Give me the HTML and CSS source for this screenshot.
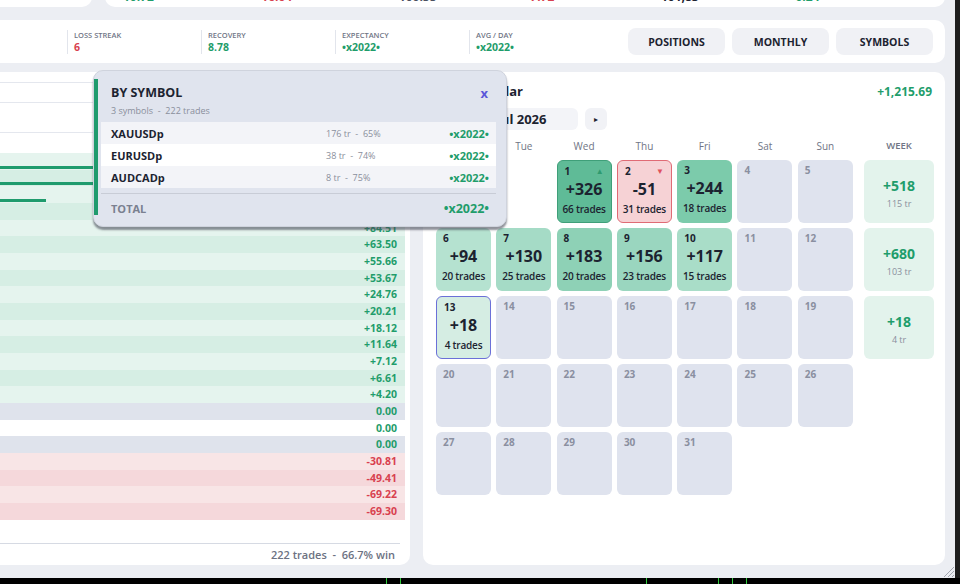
FILE: index.html
```html
<!DOCTYPE html>
<html lang="en">
<head>
  <meta charset="UTF-8" />
  <meta name="viewport" content="width=device-width, initial-scale=1" />
  <title>Trading Journal</title>
  <link rel="stylesheet" href="styles.css">
</head>
<body>

  <div class="frame">
    <div class="app">

      <!-- cartões de resumo (cortados no topo) -->
      <div class="kpis">
        <div class="kpi-card kpi-left"></div>
        <div class="kpi-card kpi-main">
          <span class="kv green">10.72</span>
          <span class="kv red">-16.04</span>
          <span class="kv grey">+100.55</span>
          <span class="kv red">-7.72</span>
          <span class="kv">101,83</span>
          <span class="kv green">0.24</span>
        </div>
      </div>

      <div class="toolbar">
        <div class="stat stat-empty"></div>
        <div class="stat">
          <span class="stat-label">LOSS STREAK</span>
          <span class="stat-value red">6</span>
        </div>
        <div class="stat">
          <span class="stat-label">RECOVERY</span>
          <span class="stat-value green">8.78</span>
        </div>
        <div class="stat">
          <span class="stat-label">EXPECTANCY</span>
          <span class="stat-value green">•x2022•</span>
        </div>
        <div class="stat">
          <span class="stat-label">AVG / DAY</span>
          <span class="stat-value green">•x2022•</span>
        </div>
        <div class="tabs">
          <button>POSITIONS</button>
          <button>MONTHLY</button>
          <button>SYMBOLS</button>
        </div>
      </div>

      <div class="main">

        <section class="list">
          <div class="list-head"></div>
          <div class="list-filter"></div>
          <div class="list-cols"></div>
          <div class="list-sub"></div>

          <div class="row win-a"><span class="bar" style="width:160px"></span><span class="val green">+212.40</span></div>
          <div class="row win-b"><span class="bar" style="width:150px"></span><span class="val green">+180.55</span></div>
          <div class="row win-a"><span class="bar" style="width:46px"></span><span class="val green">+131.20</span></div>
          <div class="row win-b"><span class="bar"></span><span class="val green">+98.73</span></div>
          <div class="row win-a"><span class="bar"></span><span class="val green">+84.51</span></div>
          <div class="row win-b"><span class="bar"></span><span class="val green">+63.50</span></div>
          <div class="row win-a"><span class="bar"></span><span class="val green">+55.66</span></div>
          <div class="row win-b"><span class="bar"></span><span class="val green">+53.67</span></div>
          <div class="row win-a"><span class="bar"></span><span class="val green">+24.76</span></div>
          <div class="row win-b"><span class="bar"></span><span class="val green">+20.21</span></div>
          <div class="row win-a"><span class="bar"></span><span class="val green">+18.12</span></div>
          <div class="row win-b"><span class="bar"></span><span class="val green">+11.64</span></div>
          <div class="row win-a"><span class="bar"></span><span class="val green">+7.12</span></div>
          <div class="row win-b"><span class="bar"></span><span class="val green">+6.61</span></div>
          <div class="row win-a"><span class="bar"></span><span class="val green">+4.20</span></div>
          <div class="row flat"><span class="bar"></span><span class="val green">0.00</span></div>
          <div class="row flat-w"><span class="bar"></span><span class="val green">0.00</span></div>
          <div class="row flat"><span class="bar"></span><span class="val green">0.00</span></div>
          <div class="row loss-a"><span class="bar"></span><span class="val red">-30.81</span></div>
          <div class="row loss-b"><span class="bar"></span><span class="val red">-49.41</span></div>
          <div class="row loss-a"><span class="bar"></span><span class="val red">-69.22</span></div>
          <div class="row loss-b"><span class="bar"></span><span class="val red">-69.30</span></div>

          <div class="list-space"></div>
          <div class="list-foot">222 trades &nbsp;-&nbsp; 66.7% win</div>
        </section>

        <section class="calendar">
          <div class="cal-head">
            <span class="cal-title">P&amp;L Calendar</span>
            <span class="cal-total">+1,215.69</span>
          </div>
          <div class="cal-nav">
            <button class="nav-btn">◂</button>
            <div class="month">Jul 2026</div>
            <button class="nav-btn">▸</button>
          </div>

          <div class="weekdays">
            <span>Mon</span><span>Tue</span><span>Wed</span><span>Thu</span>
            <span>Fri</span><span>Sat</span><span>Sun</span><span class="wk-label">WEEK</span>
          </div>

          <div class="grid">
            <div class="cell blank"></div>
            <div class="cell blank"></div>
            <div class="cell day d1 sel"><span class="num">1</span><span class="pnl">+326</span><span class="trades">66 trades</span><span class="arrow up">▲</span></div>
            <div class="cell day loss"><span class="num">2</span><span class="pnl">-51</span><span class="trades">31 trades</span><span class="arrow down">▼</span></div>
            <div class="cell day d3"><span class="num">3</span><span class="pnl">+244</span><span class="trades">18 trades</span></div>
            <div class="cell"><span class="num">4</span></div>
            <div class="cell"><span class="num">5</span></div>
            <div class="week"><span class="wk-pnl">+518</span><span class="wk-tr">115 tr</span></div>

            <div class="cell day d6"><span class="num">6</span><span class="pnl">+94</span><span class="trades">20 trades</span></div>
            <div class="cell day d7"><span class="num">7</span><span class="pnl">+130</span><span class="trades">25 trades</span></div>
            <div class="cell day d8"><span class="num">8</span><span class="pnl">+183</span><span class="trades">20 trades</span></div>
            <div class="cell day d9"><span class="num">9</span><span class="pnl">+156</span><span class="trades">23 trades</span></div>
            <div class="cell day d10"><span class="num">10</span><span class="pnl">+117</span><span class="trades">15 trades</span></div>
            <div class="cell"><span class="num">11</span></div>
            <div class="cell"><span class="num">12</span></div>
            <div class="week"><span class="wk-pnl">+680</span><span class="wk-tr">103 tr</span></div>

            <div class="cell day today"><span class="num">13</span><span class="pnl">+18</span><span class="trades">4 trades</span></div>
            <div class="cell"><span class="num">14</span></div>
            <div class="cell"><span class="num">15</span></div>
            <div class="cell"><span class="num">16</span></div>
            <div class="cell"><span class="num">17</span></div>
            <div class="cell"><span class="num">18</span></div>
            <div class="cell"><span class="num">19</span></div>
            <div class="week"><span class="wk-pnl">+18</span><span class="wk-tr">4 tr</span></div>

            <div class="cell"><span class="num">20</span></div>
            <div class="cell"><span class="num">21</span></div>
            <div class="cell"><span class="num">22</span></div>
            <div class="cell"><span class="num">23</span></div>
            <div class="cell"><span class="num">24</span></div>
            <div class="cell"><span class="num">25</span></div>
            <div class="cell"><span class="num">26</span></div>
            <div class="week blank"></div>

            <div class="cell"><span class="num">27</span></div>
            <div class="cell"><span class="num">28</span></div>
            <div class="cell"><span class="num">29</span></div>
            <div class="cell"><span class="num">30</span></div>
            <div class="cell"><span class="num">31</span></div>
          </div>
        </section>

        <!-- popup por símbolo -->
        <div class="popup">
          <span class="popup-accent"></span>
          <div class="popup-body">
            <div class="pop-head">
              <div>
                <div class="pop-title">BY SYMBOL</div>
                <div class="pop-sub">3 symbols &nbsp;-&nbsp; 222 trades</div>
              </div>
              <span class="pop-close">x</span>
            </div>
            <div class="pop-row alt"><span class="sym">XAUUSDp</span><span class="sym-stat">176 tr &nbsp;-&nbsp; 65%</span><span class="sym-val">•x2022•</span></div>
            <div class="pop-row"><span class="sym">EURUSDp</span><span class="sym-stat">38 tr &nbsp;-&nbsp; 74%</span><span class="sym-val">•x2022•</span></div>
            <div class="pop-row alt"><span class="sym">AUDCADp</span><span class="sym-stat">8 tr &nbsp;-&nbsp; 75%</span><span class="sym-val">•x2022•</span></div>
            <div class="pop-total"><span>TOTAL</span><span class="total-val">•x2022•</span></div>
          </div>
        </div>

      </div>

      <svg class="grip" width="14" height="14" viewBox="0 0 14 14">
        <path d="M13 3 L3 13 M13 7 L7 13 M13 11 L11 13" stroke="#a3a7b1" stroke-width="1" fill="none"/>
      </svg>
    </div>
    <div class="edge"></div>
  </div>

  <div class="taskbar">
    <span class="tick"></span><span class="tick"></span><span class="tick"></span>
    <span class="tick"></span><span class="tick"></span><span class="tick"></span>
  </div>

</body>
</html>
```

FILE: styles.css
```css
/* Reset básico */
* {
  margin: 0;
  padding: 0;
  box-sizing: border-box;
}
html, body {
  height: 100%;
}
body {
  background: #000;
  font-family: 'Open Sans', 'Liberation Sans', sans-serif;
  color: #1c2330;
  overflow: hidden;
}
.green { color: #1f9d6b; }
.red { color: #d8414f; }
.grey { color: #4a5060; }

.frame {
  display: flex;
  height: 578px;
}
.app {
  width: 955px;
  background: #eceef3;
  position: relative;
  overflow: hidden;
}
.edge {
  flex: 1;
  background: #1e1e1e;
}

/* topo cortado */
.kpis {
  display: flex;
  gap: 13px;
  margin-top: -20px;
  height: 27px;
}
.kpi-card {
  background: #fff;
  border-radius: 0 0 10px 10px;
}
.kpi-left {
  width: 92px;
  border-radius: 0 0 10px 0;
}
.kpi-main {
  width: 840px;
  display: grid;
  grid-template-columns: repeat(6, 134.5px);
  padding: 10px 0 0 18px;
}
.kv {
  font-size: 12px;
  font-weight: 700;
  line-height: 14px;
}

/* barra de estatísticas */
.toolbar {
  margin-top: 13px;
  width: 945px;
  height: 43px;
  background: #fff;
  border-radius: 0 10px 10px 0;
  display: flex;
  align-items: center;
}
.stat {
  width: 134px;
  height: 24px;
  border-left: 1px solid #e2e5ec;
  padding-left: 6px;
  display: flex;
  flex-direction: column;
}
.stat-empty {
  width: 67px;
  border-left: none;
}
.stat-label {
  font-size: 7.5px;
  font-weight: 600;
  color: #6f7585;
  line-height: 10px;
}
.stat-value {
  font-size: 10.5px;
  font-weight: 700;
  line-height: 14px;
}
.tabs {
  margin-left: auto;
  padding-right: 12px;
  display: flex;
  gap: 7px;
}
.tabs button {
  width: 97px;
  height: 27px;
  border: none;
  border-radius: 8px;
  background: #f0f1f5;
  font-family: inherit;
  font-size: 10.5px;
  font-weight: 700;
  color: #1c2330;
}

/* área principal */
.main {
  margin-top: 9px;
  height: 493px;
  display: flex;
  gap: 13px;
  position: relative;
}

/* lista de trades */
.list {
  width: 410px;
  background: #fff;
  border-radius: 0 10px 10px 0;
  display: flex;
  flex-direction: column;
  padding-right: 5px;
}
.list-head {
  height: 11px;
  border-bottom: 1px solid #e4e7ee;
}
.list-filter {
  height: 20px;
  border-bottom: 1px solid #e4e7ee;
}
.list-cols {
  height: 30px;
  border-bottom: 1px solid #e4e7ee;
}
.list-sub {
  height: 20px;
}
.row {
  height: 16.68px;
  display: flex;
  justify-content: space-between;
  padding-right: 8px;
  flex-shrink: 0;
}
.bar {
  align-self: flex-end;
  height: 3px;
  margin-bottom: 1px;
  background: #1f9b6d;
}
.val {
  font-size: 10.5px;
  font-weight: 700;
  line-height: 16.68px;
}
.win-a { background: #e5f4ee; }
.win-b { background: #d6eee4; }
.flat { background: #dfe3ec; }
.flat-w { background: #fff; }
.loss-a { background: #f8e5e6; }
.loss-b { background: #f5d8db; }
.list-space {
  flex: 1;
}
.list-foot {
  height: 22px;
  margin-right: 5px;
  padding-right: 5px;
  border-top: 1px solid #d6dae3;
  text-align: right;
  font-size: 11px;
  font-weight: 600;
  line-height: 21px;
  color: #6c7282;
}

/* calendário */
.calendar {
  width: 522px;
  background: #fff;
  border-radius: 10px;
  padding: 10px 11px 0 13px;
}
.cal-head {
  height: 18px;
  display: flex;
  justify-content: space-between;
  align-items: center;
  padding-right: 2px;
}
.cal-title {
  font-size: 13px;
  font-weight: 700;
}
.cal-total {
  font-size: 12px;
  font-weight: 700;
  color: #1f9d6b;
}
.cal-nav {
  margin-top: 8px;
  height: 22px;
  display: flex;
  gap: 7px;
}
.nav-btn {
  width: 22px;
  height: 22px;
  border: none;
  border-radius: 6px;
  background: #f1f2f6;
  font-size: 8px;
  color: #1c2330;
}
.month {
  width: 113px;
  border-radius: 6px;
  background: #f3f4f8;
  text-align: center;
  font-size: 13px;
  font-weight: 700;
  line-height: 22px;
}
.weekdays, .grid {
  display: grid;
  grid-template-columns: repeat(7, 55px) 76px;
  column-gap: 5.3px;
}
.weekdays {
  margin-top: 8px;
  height: 16px;
  font-size: 10px;
  line-height: 16px;
  color: #6f7585;
  text-align: center;
}
.wk-label {
  width: 70px;
  justify-self: end;
  font-weight: 600;
  font-size: 9.5px;
}
.grid {
  margin-top: 6px;
  grid-auto-rows: 63px;
  row-gap: 5px;
}
.cell {
  position: relative;
  border-radius: 6px;
  background: #dfe3ee;
  padding: 4px 1px;
  display: flex;
  flex-direction: column;
  align-items: center;
}
.cell.blank {
  background: none;
}
.num {
  align-self: flex-start;
  margin-left: 6px;
  font-size: 10px;
  font-weight: 700;
  line-height: 13px;
  color: #8a8fa0;
}
.day .num {
  color: #1c2330;
}
.pnl {
  font-size: 16px;
  font-weight: 700;
  line-height: 22px;
}
.trades {
  margin-top: 2px;
  font-size: 10px;
  font-weight: 600;
  line-height: 14px;
  letter-spacing: -0.2px;
  white-space: nowrap;
}
.arrow {
  position: absolute;
  top: 4px;
  right: 7px;
  font-size: 8px;
}
.arrow.up { color: #2f9a70; }
.arrow.down { color: #e0505c; }
.d1 { background: #5fbb97; }
.sel { border: 1px solid #3f9f79; }
.loss { background: #f6d2d5; border: 1px solid #e06b75; }
.d3 { background: #7ccbab; }
.d6 { background: #b5e2d0; }
.d7 { background: #a5dbc6; }
.d8 { background: #8ed1b6; }
.d9 { background: #9ad6bf; }
.d10 { background: #a9ddc8; }
.today { background: #d5ede3; border: 1px solid #6b70d8; }

.week {
  width: 70px;
  justify-self: end;
  border-radius: 6px;
  background: #e3f3ec;
  padding-top: 17px;
  display: flex;
  flex-direction: column;
  align-items: center;
}
.week.blank {
  background: none;
}
.wk-pnl {
  font-size: 14px;
  font-weight: 700;
  line-height: 18px;
  color: #1f9d6b;
}
.wk-tr {
  margin-top: 3px;
  font-size: 9px;
  line-height: 12px;
  color: #8a8f9c;
}

/* popup */
.popup {
  position: absolute;
  left: 93px;
  top: -2px;
  width: 414px;
  height: 157px;
  background: #e0e4ee;
  border: 1px solid #cfd3dd;
  border-radius: 10px;
  box-shadow: 0 3px 2px rgba(70, 74, 86, 0.6);
  padding: 8px 10px 0 7px;
}
.popup-accent {
  position: absolute;
  left: 0;
  top: 8px;
  width: 4px;
  height: 136px;
  background: #1f9b6d;
}
.pop-head {
  height: 43px;
  padding: 6px 8px 0 10px;
  display: flex;
  justify-content: space-between;
}
.pop-title {
  font-size: 12.5px;
  font-weight: 700;
  line-height: 16px;
}
.pop-sub {
  margin-top: 4px;
  font-size: 9px;
  line-height: 12px;
  color: #8a8f9c;
}
.pop-close {
  font-size: 13px;
  font-weight: 700;
  line-height: 16px;
  color: #5b57d9;
}
.pop-row {
  height: 22px;
  display: grid;
  grid-template-columns: 215px 1fr auto;
  align-items: center;
  padding: 0 7px 0 10px;
  background: #fff;
}
.pop-row.alt {
  background: #f3f4f8;
}
.sym {
  font-size: 11px;
  font-weight: 700;
}
.sym-stat {
  font-size: 9px;
  color: #8a8f9c;
}
.sym-val {
  font-size: 11px;
  font-weight: 700;
  color: #1f9d6b;
}
.pop-total {
  margin-top: 5px;
  height: 30px;
  border-top: 1px solid #c8ccd6;
  padding: 0 7px 0 10px;
  display: flex;
  justify-content: space-between;
  align-items: center;
  font-size: 11px;
  font-weight: 700;
  color: #7a8090;
}
.total-val {
  font-size: 12.5px;
  color: #1f9d6b;
}

.grip {
  position: absolute;
  right: 0;
  bottom: 0;
}

/* barra inferior */
.taskbar {
  height: 6px;
  background: #000;
  position: relative;
}
.tick {
  position: absolute;
  top: 0;
  width: 1px;
  height: 6px;
  background: #31c93c;
}
.tick:nth-child(1) { left: 386px; }
.tick:nth-child(2) { left: 400px; }
.tick:nth-child(3) { left: 646px; }
.tick:nth-child(4) { left: 718px; }
.tick:nth-child(5) { left: 732px; }
.tick:nth-child(6) { left: 746px; }
```
